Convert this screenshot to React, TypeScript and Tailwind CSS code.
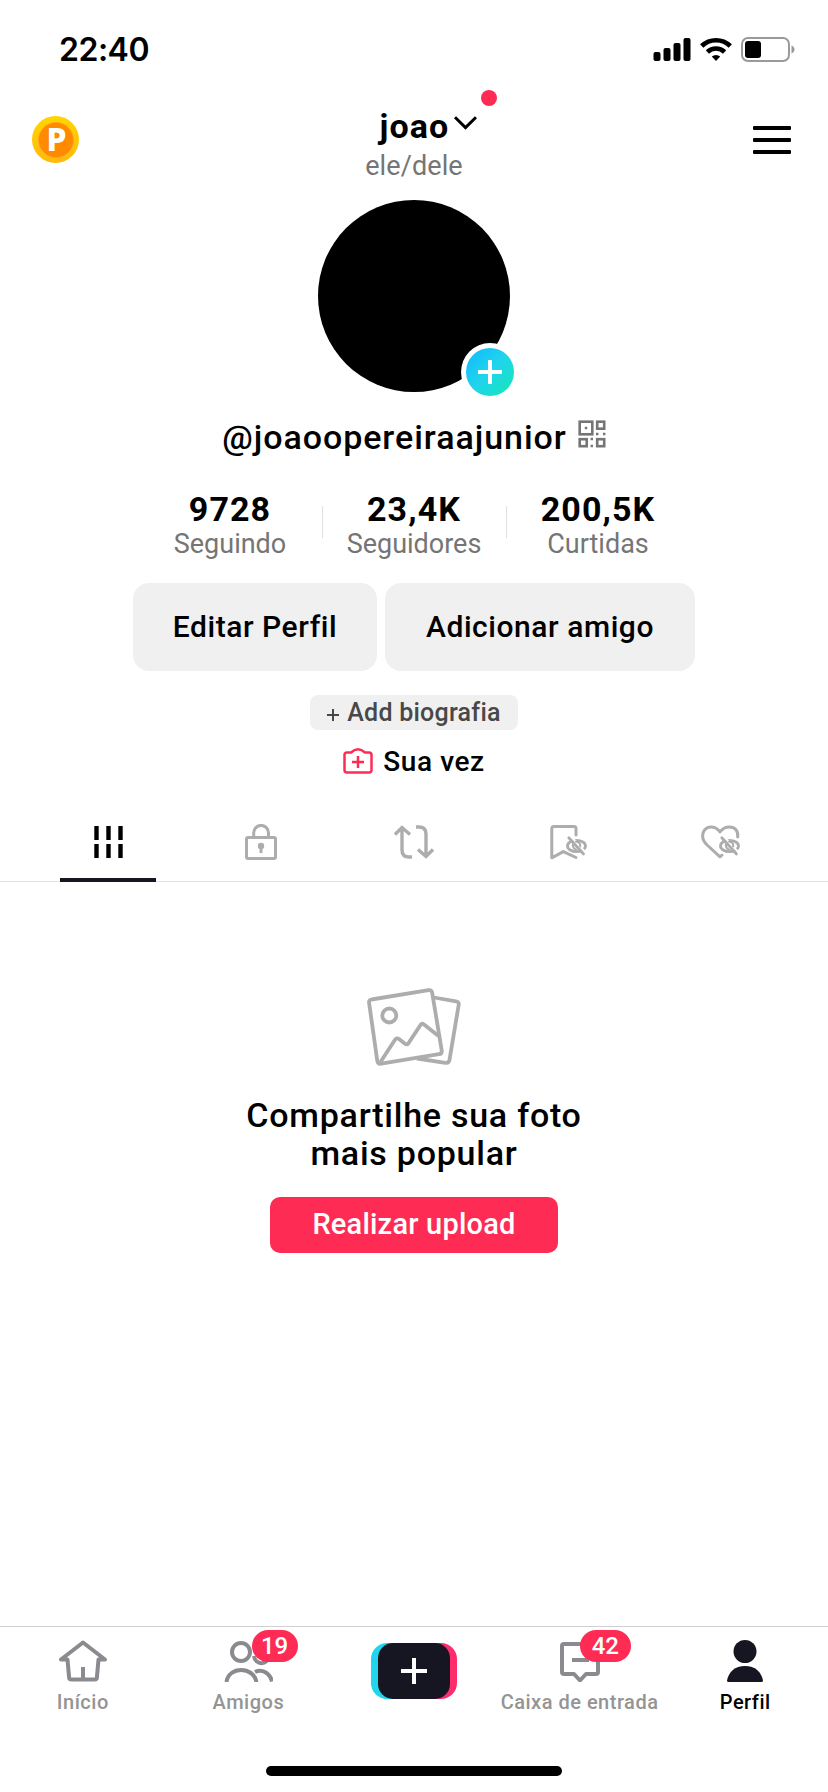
import type { ReactNode } from "react";

const stats = [
  { value: "9728", label: "Seguindo" },
  { value: "23,4K", label: "Seguidores" },
  { value: "200,5K", label: "Curtidas" },
];

function StatusBar() {
  return (
    <div className="flex h-[90px] justify-between pt-[34px] pl-[59px] pr-[33px]">
      <span className="font-[Inter,sans-serif] text-[32px] leading-[32px] font-semibold tracking-[-0.5px]">22:40</span>
      <div className="flex gap-[9px] pt-[3px]">
        <svg width="38" height="25" viewBox="0 0 38 25">
          <rect x="0.500" y="15" width="7" height="9" rx="2" />
          <rect x="10.500" y="11" width="7" height="13" rx="2" />
          <rect x="20.500" y="6" width="7" height="18" rx="2" />
          <rect x="30.500" y="1" width="7" height="23" rx="2" />
        </svg>
        <svg width="32" height="25" viewBox="0 0 32 25" fill="none" stroke="#000" strokeWidth="4.6">
          <path d="M1.7 9a20.5 20.5 0 0 1 28.6 0" />
          <path d="M7.4 15a12.4 12.4 0 0 1 17.2 0" />
          <path d="M11.8 19.6a6.2 6.2 0 0 1 8.4 0L16 24z" fill="#000" stroke="none" />
        </svg>
        <svg width="54" height="25" viewBox="0 0 54 25">
          <rect x="1" y="1" width="47" height="23" rx="6" fill="none" stroke="#9a9a9a" strokeWidth="2" />
          <rect x="4" y="4" width="16" height="17" rx="3" />
          <path d="M50.500 8.500c4 1.500 4 6.500 0 8z" fill="#9a9a9a" />
        </svg>
      </div>
    </div>
  );
}

function Header() {
  return (
    <header className="grid h-[100px] grid-cols-3 pl-8 pr-[37px]">
      <div className="flex items-center pb-px">
        <div className="flex size-[47px] items-center justify-center rounded-full bg-linear-to-b from-[#ffd500] to-[#ffb90d]">
          <div className="flex size-[36px] items-center justify-center rounded-full border border-[#ffa51a] bg-[#ff8a00] pb-0.5 pl-0.5 font-['Noto_Sans',sans-serif] text-[32px] leading-none font-extrabold text-white">
            P
          </div>
        </div>
      </div>
      <div className="flex flex-col items-center pt-[18px] pl-[5px]">
        <div className="relative flex gap-[5px] pl-[29px]">
          <span className="text-[34px] leading-[36px] font-bold tracking-[1.1px]">joao</span>
          <svg className="mt-[7px]" width="23" height="15" viewBox="0 0 23 15" fill="none" stroke="#000" strokeWidth="3">
            <path d="M1 2.2 11.5 12.6 22 2.2" />
          </svg>
          <span className="absolute -top-[18px] -right-[20px] size-4 rounded-full bg-[#fe2c55]" />
        </div>
        <span className="mt-[6px] text-[27px] leading-[32px] tracking-[0.1px] text-[#757575]">ele/dele</span>
      </div>
      <div className="flex flex-col items-end justify-center gap-2">
        <span className="h-1 w-[38px] rounded-[1px] bg-black" />
        <span className="h-1 w-[38px] rounded-[1px] bg-black" />
        <span className="h-1 w-[38px] rounded-[1px] bg-black" />
      </div>
    </header>
  );
}

function Avatar() {
  return (
    <div className="relative mx-auto mt-[10px] size-[192px] rounded-full bg-black">
      <div className="absolute -right-[9px] -bottom-[9px] rounded-full bg-white p-[5px]">
        <div className="flex size-12 items-center justify-center rounded-full bg-linear-to-br from-[#14b8fc] via-[#20d5ec] to-[#1be7b0]">
          <svg width="24" height="24" viewBox="0 0 24 24" stroke="#fff" strokeWidth="4">
            <path d="M12 0v24M0 12h24" />
          </svg>
        </div>
      </div>
    </div>
  );
}

function QrIcon() {
  return (
    <svg className="mt-[3px]" width="28" height="28" viewBox="0 0 28 28" fill="none" stroke="#757575" strokeWidth="2.6">
      <rect x="1.700" y="1.700" width="12.600" height="12.600" />
      <rect x="19.200" y="1.700" width="7" height="7" />
      <rect x="1.700" y="19.200" width="7" height="7" />
      <rect x="19.200" y="19.200" width="7" height="7" />
      <path d="M6.800 8h2.400M12.600 19h2.400M12.600 26h2.400M18 14h2.400M25 14h2.400" />
    </svg>
  );
}

function Tab({ active, children }: { active?: boolean; children: ReactNode }) {
  return (
    <div className="relative flex w-[153px] items-center justify-center">
      {children}
      {active && <span className="absolute -bottom-px left-1/2 h-1 w-24 -translate-x-1/2 bg-[#161622]" />}
    </div>
  );
}

function HiddenEye() {
  return (
    <g strokeWidth="2.8">
      <ellipse cx="29.500" cy="22" rx="9" ry="5.700" fill="#fff" stroke="#fff" strokeWidth="7" />
      <ellipse cx="29.500" cy="22" rx="9" ry="5.700" />
      <path d="M24 12.500 38.500 28.500" stroke="#fff" strokeWidth="2" />
      <path d="M26.300 18.500q-1.800 5 2.700 7.200M29 17.500q5 1 4.200 5" strokeWidth="2" />
      <path d="M21.800 13.700 36.500 30" />
    </g>
  );
}

function Tabs() {
  return (
    <div className="mt-6 h-20 border-b border-[#e3e3e3]">
      <div className="mx-auto flex h-full w-[765px]">
        <Tab active>
          <svg width="30" height="32" viewBox="0 0 30 32" stroke="#000" strokeWidth="4.400">
            <path d="M3.500 0v14M15.500 0v14M27.500 0v14M3.500 18v14M15.500 18v14M27.500 18v14" />
          </svg>
        </Tab>
        <Tab>
          <svg width="32" height="36" viewBox="0 0 32 36" fill="none" stroke="#adadad" strokeWidth="3">
            <rect x="1.500" y="13.500" width="29" height="21" rx="1.500" />
            <path d="M8.700 13V8.800a7.400 7.400 0 0 1 14.800 0V13M16 22v7" />
            <circle cx="16" cy="22" r="3.200" fill="#adadad" stroke="none" />
          </svg>
        </Tab>
        <Tab>
          <svg width="40" height="34" viewBox="0 0 40 34" fill="none" stroke="#adadad" strokeWidth="3.400">
            <path d="M1 9.500 8 2.500l8 7M8 3v22q0 7 7 7h3M22 2h3q7 0 7 7v22M24 24.500l8 7 7-7" />
          </svg>
        </Tab>
        <Tab>
          <svg width="40" height="36" viewBox="0 0 40 36" fill="none" stroke="#adadad" strokeWidth="3" strokeLinejoin="round" strokeLinecap="round">
            <path d="M29 11V4.500Q29 2.500 27 2.500H6.800q-2 0-2 2V33.800L16.300 27.700" />
            <HiddenEye />
            <path d="M16.300 27.700 29 33.500" />
          </svg>
        </Tab>
        <Tab>
          <svg width="42" height="36" viewBox="0 0 42 36" fill="none" stroke="#adadad" strokeWidth="3" strokeLinejoin="round" strokeLinecap="round">
            <path d="M38.700 13C39.500 7 36 3 30.500 3c-4.500 0-7.500 2-9.500 5C19 5 16 3 12 3 6.500 3 3.600 7.500 3.600 12c0 4 1.900 6.500 4.500 9L21 32.800l2-1.800" />
            <g transform="translate(1 0)">
              <HiddenEye />
            </g>
          </svg>
        </Tab>
      </div>
    </div>
  );
}

function EmptyState() {
  return (
    <section className="mt-[106px] flex flex-col items-center">
      <svg width="94" height="78" viewBox="0 0 94 78" fill="none" stroke="#adadad" strokeWidth="3.800" strokeLinejoin="round">
        <path d="M67 9.500l22 3.800q3.200.5 2.700 3.500l-9.200 55q-.5 3.500-4 3L50 70.500" />
        <path d="M4.500 11.500 61.500 2.200q3.200-.5 3.700 2.700l9.500 57.500q.5 3.300-2.800 3.800l-57.700 9.500q-3.300.5-3.900-2.800L2.100 15q-.5-3 2.400-3.500z" />
        <circle cx="22.300" cy="27.500" r="7" />
        <path d="M13.500 74 28 51.800q1.700-2.500 4-.8l6 4.800q2 1.500 3.500-.7L53.500 37q1.500-2 3.500-.5L71.500 48" />
      </svg>
      <h2 className="mt-[30px] text-center text-[34px] leading-[38px] font-medium tracking-[0.75px]">
        Compartilhe sua foto
        <br />
        mais popular
      </h2>
      <button className="mt-[25px] h-14 w-[288px] rounded-[10px] bg-[#fe2c55] pb-0.5 text-[29px] leading-[32px] font-medium tracking-[0.2px] text-white">
        Realizar upload
      </button>
    </section>
  );
}

function NavItem({ label, badge, active, children }: { label: string; badge?: ReactNode; active?: boolean; children: ReactNode }) {
  return (
    <div className="relative flex flex-1 flex-col items-center pt-[13px]">
      {children}
      {badge}
      <span className={`mt-2 text-[20px] leading-6 font-medium tracking-[0.5px] whitespace-nowrap ${active ? "text-black" : "text-[#949494]"}`}>{label}</span>
    </div>
  );
}

function BottomNav() {
  return (
    <nav className="mt-auto h-[166px] border-t border-[#d0d0d0]">
      <div className="flex h-[139px]">
        <NavItem label="Início">
          <svg width="48" height="42" viewBox="0 0 48 42" fill="none" stroke="#8a8b8f" strokeWidth="4" strokeLinejoin="round">
            <path d="M2 19.500h6.500l1.600 18q.2 2 2.200 2h23.400q2 0 2.200-2l1.600-18H46L24 2.500z" />
            <path d="M24 27v12" />
          </svg>
        </NavItem>
        <NavItem
          label="Amigos"
          badge={
            <span className="absolute top-[3px] left-[86px] flex h-8 w-[46px] items-center justify-center rounded-full bg-[#fe2c55] text-[24px] font-medium text-white">
              19
            </span>
          }
        >
          <svg width="50" height="42" viewBox="0 0 50 42" fill="none" stroke="#8a8b8f" strokeWidth="4">
            <circle cx="18" cy="12" r="9" />
            <path d="M3.500 42c2-16 27-16 30 0M31 16c1 9.500 14 9.500 15 0M32 32c7-3.500 15 1 17 9.500" />
          </svg>
        </NavItem>
        <div className="flex flex-1 justify-center pt-4">
          <div className="flex h-14 w-[86px] justify-center rounded-[16px] bg-linear-to-r from-[#20d5ec] from-50% to-[#fe2c6d] to-50%">
            <div className="flex h-14 w-[72px] items-center justify-center rounded-[15px] bg-[#161622]">
              <svg width="26" height="26" viewBox="0 0 26 26" stroke="#fff" strokeWidth="4">
                <path d="M13 0v26M0 13h26" />
              </svg>
            </div>
          </div>
        </div>
        <NavItem
          label="Caixa de entrada"
          badge={
            <span className="absolute top-[3px] left-[83px] flex h-8 w-[51px] items-center justify-center rounded-full bg-[#fe2c55] text-[24px] font-medium text-white">
              42
            </span>
          }
        >
          <svg width="40" height="42" viewBox="0 0 40 42" fill="none" stroke="#8a8b8f" strokeWidth="4" strokeLinejoin="round">
            <path d="M4 4h32q2 0 2 2v26q0 2-2 2H26L20 40.500 14 34H4q-2 0-2-2V6q0-2 2-2zM12 20h17" />
          </svg>
        </NavItem>
        <NavItem label="Perfil" active>
          <svg width="36" height="42" viewBox="0 0 36 42" fill="#161622">
            <circle cx="18" cy="11.500" r="11.500" />
            <path d="M1.500 42Q0 42 0 40.500C1.500 32 8 26 18 26s16.500 6 18 14.500Q36 42 34.500 42z" />
          </svg>
        </NavItem>
      </div>
      <div className="mx-auto h-[10px] w-[296px] rounded-full bg-black" />
    </nav>
  );
}

export default function App() {
  return (
    <div className="flex h-[1792px] w-[828px] flex-col bg-white font-[Roboto,sans-serif] text-black">
      <StatusBar />
      <Header />
      <Avatar />

      <div className="mt-[25px] flex justify-center gap-[11px]">
        <span className="text-[34px] leading-10 font-medium tracking-[0.95px]">@joaoopereiraajunior</span>
        <QrIcon />
      </div>

      <div className="mx-auto mt-[34px] flex">
        {stats.map((s, i) => (
          <div key={s.label} className="relative flex w-[184px] flex-col items-center">
            {i > 0 && <span className="absolute top-[15px] left-0 h-8 w-px bg-[#e0e0e0]" />}
            <span className="text-[34px] leading-9 font-bold tracking-[1.1px]">{s.value}</span>
            <span className="mt-px -mb-px text-[27px] leading-8 text-[#757575]">{s.label}</span>
          </div>
        ))}
      </div>

      <div className="mt-6 flex justify-center gap-2 text-[30px] font-medium tracking-[0.55px]">
        <button className="h-[88px] w-[244px] rounded-[16px] bg-[#f0f0f0] pb-0.5">Editar Perfil</button>
        <button className="h-[88px] w-[310px] rounded-[16px] bg-[#f0f0f0] pb-0.5">Adicionar amigo</button>
      </div>

      <button className="mx-auto mt-6 flex h-[35px] w-[208px] items-center justify-center gap-2 rounded-lg bg-[#f0f0f0] text-[25px] font-medium tracking-[0.25px] text-[#484848]">
        <svg className="mt-1" width="12" height="12" viewBox="0 0 12 12" stroke="#484848" strokeWidth="2">
          <path d="M6 0v12M0 6h12" />
        </svg>
        Add biografia
      </button>

      <div className="mt-4 flex justify-center gap-[10px]">
        <svg className="mt-0.5" width="30" height="26" viewBox="0 0 30 26" fill="none" stroke="#fe2c55" strokeWidth="2.500" strokeLinejoin="round">
          <path d="M4 4.500h4q3.500-3.200 7-3.200t7 3.200h4q2.500 0 2.500 2.500v15q0 2.500-2.500 2.500H4q-2.500 0-2.500-2.500V7Q1.500 4.500 4 4.500zM15 8v12M9 14h12" />
        </svg>
        <span className="text-[28px] leading-8 font-medium tracking-[0.6px]">Sua vez</span>
      </div>

      <Tabs />
      <EmptyState />
      <BottomNav />
    </div>
  );
}
